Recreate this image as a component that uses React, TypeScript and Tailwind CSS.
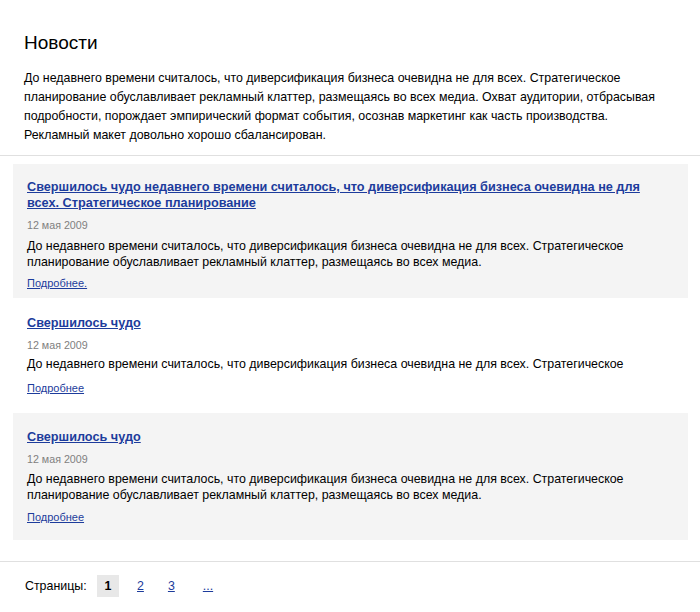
import React from "react";

const font = { fontFamily: '"Liberation Sans", Arial, sans-serif' };

type Item = {
  title: React.ReactNode;
  body: React.ReactNode;
  more: string;
  bg: boolean;
  pad: string;
  dateMt: string;
  bodyMt: string;
  moreMt: string;
};

const items: Item[] = [
  {
    title: (
      <>
        Свершилось чудо недавнего времени считалось, что диверсификация бизнеса очевидна не для
        <br />
        всех. Стратегическое планирование
      </>
    ),
    body: (
      <>
        До недавнего времени считалось, что диверсификация бизнеса очевидна не для всех. Стратегическое
        <br />
        планирование обуславливает рекламный клаттер, размещаясь во всех медиа.
      </>
    ),
    more: "Подробнее.",
    bg: true,
    pad: "pt-[15px] pb-[7px]",
    dateMt: "mt-[6px]",
    bodyMt: "mt-[5px]",
    moreMt: "mt-[5px]",
  },
  {
    title: <>Свершилось чудо</>,
    body: <>До недавнего времени считалось, что диверсификация бизнеса очевидна не для всех. Стратегическое</>,
    more: "Подробнее",
    bg: false,
    pad: "pt-[17px] pb-[17px]",
    dateMt: "mt-[6px]",
    bodyMt: "mt-[3px]",
    moreMt: "mt-[8px]",
  },
  {
    title: <>Свершилось чудо</>,
    body: (
      <>
        До недавнего времени считалось, что диверсификация бизнеса очевидна не для всех. Стратегическое
        <br />
        планирование обуславливает рекламный клаттер, размещаясь во всех медиа.
      </>
    ),
    more: "Подробнее",
    bg: true,
    pad: "pt-[16px] pb-[15px]",
    dateMt: "mt-[6px]",
    bodyMt: "mt-[4px]",
    moreMt: "mt-[6px]",
  },
];

export default function App() {
  return (
    <div className="w-[700px] h-[612px] bg-white text-black overflow-hidden" style={font}>
      <div className="px-6 pt-[30px]">
        <h1 className="text-[19px] leading-[26px] font-normal text-black">Новости</h1>
        <p className="mt-[13px] text-[12.4px] leading-[19px] whitespace-nowrap">
          До недавнего времени считалось, что диверсификация бизнеса очевидна не для всех. Стратегическое
          <br />
          планирование обуславливает рекламный клаттер, размещаясь во всех медиа. Охват аудитории, отбрасывая
          <br />
          подробности, порождает эмпирический формат события, осознав маркетинг как часть производства.
          <br />
          Рекламный макет довольно хорошо сбалансирован.
        </p>
      </div>
      <div className="mt-[10px] h-px bg-[#e0e0e0]" />
      <div className="mt-[8px] ml-[13px] mr-[12px] flex flex-col">
        {items.map((it, i) => (
          <div key={i} className={`${it.bg ? "bg-[#f4f4f4]" : ""} px-[14px] ${it.pad}`}>
            <a
              href="#"
              className="block w-fit text-[12.7px] leading-[16px] font-bold text-[#1d3c9c] underline whitespace-nowrap"
            >
              {it.title}
            </a>
            <div className={`${it.dateMt} text-[10.7px] leading-[16px] text-[#808080]`}>12 мая 2009</div>
            <p className={`${it.bodyMt} text-[12.4px] leading-[16px] whitespace-nowrap`}>{it.body}</p>
            <a href="#" className={`${it.moreMt} block w-fit text-[11px] leading-[16px] text-[#1d3c9c] underline`}>
              {it.more}
            </a>
          </div>
        ))}
      </div>
      <div className="mt-[21px] h-px bg-[#e0e0e0]" />
      <div className="mt-[13px] pl-[25px] flex items-center text-[12.4px]">
        <span className="w-[72px] leading-[22px]">Страницы:</span>
        <span className="w-[22px] h-[22px] bg-[#e8e8e8] flex items-center justify-center font-bold">1</span>
        <a href="#" className="ml-[18px] text-[#1d3c9c] underline leading-[22px]">2</a>
        <a href="#" className="ml-[24px] text-[#1d3c9c] underline leading-[22px]">3</a>
        <a href="#" className="ml-[28px] text-[#1d3c9c] underline leading-[22px]">...</a>
      </div>
    </div>
  );
}
